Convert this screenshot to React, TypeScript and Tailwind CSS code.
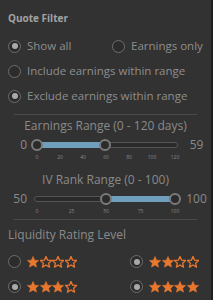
import React from "react";

function Radio({ checked }: { checked?: boolean }) {
  return (
    <span className="flex h-[13px] w-[13px] shrink-0 items-center justify-center rounded-full border border-[#6e6e6e] bg-[#2c2c2c]">
      {checked && <span className="h-[6px] w-[6px] rounded-full bg-[#a9a9a9]" />}
    </span>
  );
}

function Star({ filled }: { filled: boolean }) {
  return (
    <svg width="12" height="12" viewBox="1 1.2 22 21.6" className="shrink-0">
      <path
        d="M12 1.8l3 6.8 7.4.6-5.6 4.9 1.7 7.3L12 17.5l-6.5 3.9 1.7-7.3L1.6 9.2l7.4-.6z"
        fill={filled ? "#e9782f" : "none"}
        stroke="#e9782f"
        strokeWidth={filled ? 1 : 2.4}
        strokeLinejoin="round"
      />
    </svg>
  );
}

function Stars({ n }: { n: number }) {
  return (
    <span className="flex gap-[0.5px]">
      {[0, 1, 2, 3].map((i) => (
        <Star key={i} filled={i < n} />
      ))}
    </span>
  );
}

function Slider({
  left,
  right,
  lo,
  hi,
  ticks,
}: {
  left: string;
  right: string;
  lo: number;
  hi: number;
  ticks: string[];
}) {
  return (
    <div className="flex items-start">
      <div className="w-[28px] pr-[1px] text-right text-[12px] leading-[16px] text-[#8a8a8a]">{left}</div>
      <div className="w-[154px] pl-[9px] pr-[7px]">
        <div className="relative mt-[5px] h-[6px]">
          <div className="absolute inset-x-[-3px] top-0 h-[6px] rounded-full border border-[#555] bg-[#2a2a2a]" />
          <div
            className="absolute top-0 h-[6px] bg-[#6f9fbd]"
            style={{ left: `${lo}%`, width: `${hi - lo}%` }}
          />
          {[lo, hi].map((p, i) => (
            <div
              key={i}
              className="absolute top-[-3px] h-[12px] w-[12px] -translate-x-1/2 rounded-full border-2 border-[#7a7a7a] bg-[#2b2b2b]"
              style={{ left: `${p}%` }}
            />
          ))}
        </div>
        <div className="mt-[6px] flex justify-between">
          {ticks.map((t) => (
            <span key={t} className="flex w-0 justify-center text-[5px] leading-[6px] text-[#888]">
              <span className="whitespace-nowrap">{t}</span>
            </span>
          ))}
        </div>
      </div>
      <div className="flex-1 text-center text-[12px] leading-[16px] text-[#8a8a8a]">{right}</div>
    </div>
  );
}

export default function App() {
  return (
    <div className="h-[300px] w-[213px] overflow-hidden whitespace-nowrap border-r-2 border-[#1e1e1e] bg-[#323232] font-['Open_Sans',sans-serif]">
      <div className="pl-[8px] pt-[12px] text-[10px] font-bold leading-[13px] text-[#a3a3a3]">Quote Filter</div>

      <div className="mt-[13px] flex items-center pl-[8px] text-[11.5px] leading-[16px] text-[#8e8e8e]">
        <div className="flex w-[104px] items-center gap-[6px]">
          <Radio checked />
          <span>Show all</span>
        </div>
        <div className="flex items-center gap-[6px]">
          <Radio />
          <span>Earnings only</span>
        </div>
      </div>

      <div className="mt-[9px] flex items-center gap-[6px] pl-[8px] text-[11.5px] leading-[16px] text-[#8e8e8e]">
        <Radio />
        <span>Include earnings within range</span>
      </div>
      <div className="mt-[9px] flex items-center gap-[6px] pl-[8px] text-[11.5px] leading-[16px] text-[#8e8e8e]">
        <Radio checked />
        <span>Exclude earnings within range</span>
      </div>

      <div className="mx-[14px] mt-[10px] h-px bg-[#4a4a4a]" />

      <div className="mt-[3px] text-center text-[12px] leading-[16px] text-[#8a8a8a]">Earnings Range (0 - 120 days)</div>
      <div className="mt-[3px]">
        <Slider left="0" right="59" lo={0} hi={49.2} ticks={["0", "20", "40", "60", "80", "100", "120"]} />
      </div>

      <div className="mt-[12px] text-center text-[12px] leading-[16px] text-[#8a8a8a]">IV Rank Range (0 - 100)</div>
      <div className="mt-[3px]">
        <Slider left="50" right="100" lo={50} hi={100} ticks={["0", "25", "50", "75", "100"]} />
      </div>

      <div className="mx-[14px] mt-[5px] h-px bg-[#4a4a4a]" />

      <div className="mt-[7px] pl-[8px] text-[12px] leading-[16px] text-[#8a8a8a]">Liquidity Rating Level</div>

      <div className="mt-[12px] grid grid-cols-[122px_1fr] gap-y-[12px] pl-[8px]">
        <div className="flex items-center gap-[6px]">
          <Radio />
          <Stars n={1} />
        </div>
        <div className="flex items-center gap-[6px]">
          <Radio checked />
          <Stars n={2} />
        </div>
        <div className="flex items-center gap-[6px]">
          <Radio checked />
          <Stars n={3} />
        </div>
        <div className="flex items-center gap-[6px]">
          <Radio checked />
          <Stars n={4} />
        </div>
      </div>
    </div>
  );
}
